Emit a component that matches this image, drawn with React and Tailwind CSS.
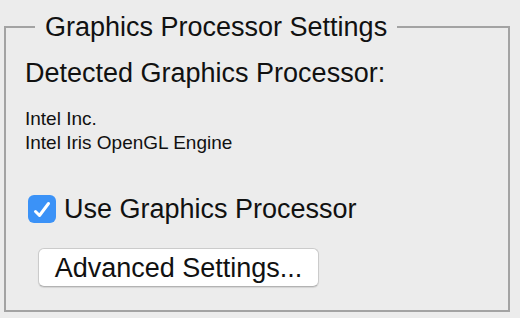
import React, { useState } from 'react';

const App = () => {
    const [useGpu, setUseGpu] = useState(true);

    return (
        <div className="w-[520px] h-[318px] bg-[#ececec] pt-[13px] pl-1 text-[#111] font-['Liberation_Sans',Arial,sans-serif]">
            <fieldset className="w-[506px] h-[299px] border-2 border-[#a3a3a3] m-0 p-0">
                <legend className="ml-[29px] px-[10px] text-[27px] leading-[28px]">Graphics Processor Settings</legend>

                <div className="pl-[19px] pt-[16px]">
                    <div className="text-[27px] leading-[32px]">Detected Graphics Processor:</div>

                    <div className="mt-[18px] text-[19px] leading-[24px]">
                        <div>Intel Inc.</div>
                        <div>Intel Iris OpenGL Engine</div>
                    </div>

                    {/* Checkbox */}
                    <label className="mt-[38px] ml-[3px] flex items-center gap-[8px] cursor-default">
                        <button
                            type="button"
                            onClick={() => setUseGpu(!useGpu)}
                            className={`w-[28px] h-[28px] rounded-[6px] flex items-center justify-center ${useGpu ? 'bg-[#3b92f7]' : 'bg-white border border-[#b5b5b5]'}`}
                        >
                            {useGpu && (
                                <svg width="28" height="28" viewBox="0 0 28 28" fill="none">
                                    <path d="M7.5 16.5 L11.5 20.5 L20.5 8.5" stroke="white" strokeWidth="3" strokeLinecap="round" strokeLinejoin="round" />
                                </svg>
                            )}
                        </button>
                        <span className="text-[27px] leading-[32px]">Use Graphics Processor</span>
                    </label>

                    {/* Tombol pengaturan lanjutan */}
                    <button
                        type="button"
                        className="mt-[23px] ml-[13px] w-[281px] h-[39px] bg-white rounded-[6px] border border-[#cbcbcb] border-b-[#b3b3b3] shadow-[0_1px_1px_rgba(0,0,0,0.1)] text-[27px] leading-[32px] text-[#111] flex items-center justify-center"
                    >
                        Advanced Settings...
                    </button>
                </div>
            </fieldset>
        </div>
    );
};

export default App;
